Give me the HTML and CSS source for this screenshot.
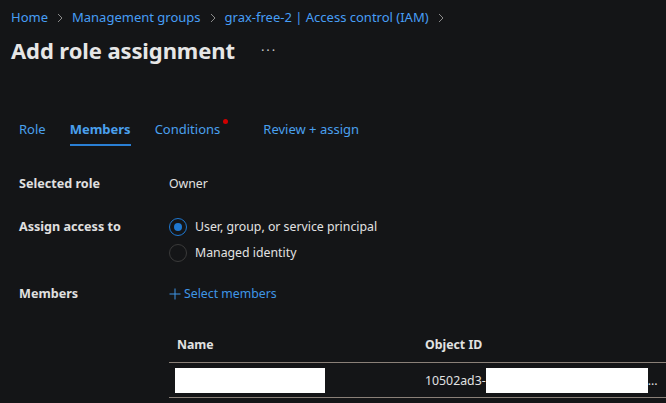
FILE: index.html
```html
<!DOCTYPE html>
<html>
<head>
<meta charset="utf-8">
<link rel="stylesheet" href="styles.css">
</head>
<body>
<div class="page">
  <nav class="crumbs">
    <a>Home</a>
    <svg class="chev" width="6" height="10" viewBox="0 0 6 10"><path d="M1 1l4 4-4 4" fill="none" stroke="#8a8a8a" stroke-width="1"/></svg>
    <a>Management groups</a>
    <svg class="chev" width="6" height="10" viewBox="0 0 6 10"><path d="M1 1l4 4-4 4" fill="none" stroke="#8a8a8a" stroke-width="1"/></svg>
    <a>grax-free-2 | Access control (IAM)</a>
    <svg class="chev" width="6" height="10" viewBox="0 0 6 10"><path d="M1 1l4 4-4 4" fill="none" stroke="#8a8a8a" stroke-width="1"/></svg>
  </nav>
  <div class="titlebar">
    <h1>Add role assignment</h1>
    <span class="more">···</span>
  </div>
  <div class="body">
    <div class="tabs">
      <span class="tab">Role</span>
      <span class="tab active">Members</span>
      <span class="tab dot">Conditions</span>
      <span class="tab review">Review + assign</span>
    </div>
    <div class="form">
      <div class="row r1">
        <div class="label">Selected role</div>
        <div class="value">Owner</div>
      </div>
      <div class="row r2">
        <div class="label">Assign access to</div>
        <div class="value radios">
          <div class="radio on"><span class="circle"></span>User, group, or service principal</div>
          <div class="radio"><span class="circle"></span>Managed identity</div>
        </div>
      </div>
      <div class="row r3">
        <div class="label">Members</div>
        <div class="value link"><svg class="plus" width="12" height="12" viewBox="0 0 12 12"><path d="M6 0.5v11M0.5 6h11" stroke="#3f95e6" stroke-width="1" fill="none"/></svg>Select members</div>
      </div>
    </div>
    <div class="table">
      <div class="thead">
        <div class="cell c1">Name</div>
        <div class="cell c2">Object ID</div>
      </div>
      <div class="trow">
        <div class="cell c1"><span class="redact r-name"></span></div>
        <div class="cell c2">10502ad3-<span class="redact r-id"></span>...</div>
      </div>
    </div>
  </div>
</div>
</body>
</html>
```
FILE: styles.css
```css
html, body {
  margin: 0;
  padding: 0;
  background: #141517;
}
body {
  font-family: "Noto Sans", "Open Sans", sans-serif;
  font-size: 13px;
  color: #e2e2e2;
  width: 666px;
  height: 403px;
  overflow: hidden;
}
.page {
  padding-left: 11px;
}
.crumbs {
  display: flex;
  align-items: center;
  gap: 9px;
  height: 15px;
  padding-top: 10px;
  font-size: 13px;
  line-height: 15px;
}
.crumbs a {
  color: #479ef5;
}
.chev {
  display: block;
}
.titlebar {
  display: flex;
  align-items: center;
  margin-top: 9px;
  height: 32px;
}
h1 {
  margin: 0;
  font-size: 22px;
  font-weight: 700;
  color: #e6e6e6;
  line-height: 32px;
  letter-spacing: -0.1px;
}
.more {
  margin-left: 26px;
  color: #c8c8c8;
  font-size: 13px;
  line-height: 32px;
  letter-spacing: 2px;
}
.body {
  padding-left: 8px;
}
.tabs {
  display: flex;
  margin-top: 46px;
  height: 34px;
}
.tab {
  position: relative;
  margin-right: 24px;
  color: #4aa0ee;
  line-height: 34px;
  height: 34px;
  box-sizing: border-box;
}
.tab.active {
  font-weight: 700;
  border-bottom: 2px solid #2a7fd4;
}
.tab.dot {
  margin-right: 43px;
}
.tab.dot::after {
  content: "";
  position: absolute;
  right: -8px;
  top: 7px;
  width: 5px;
  height: 5px;
  border-radius: 50%;
  background: #d00000;
}
.form {
  margin-top: 29px;
}
.row {
  display: flex;
}
.label {
  width: 150px;
  font-weight: 700;
  line-height: 18px;
  color: #e0e0e0;
  font-size: 12.6px;
}
.value {
  line-height: 18px;
  font-size: 12.3px;
}
.r2 {
  margin-top: 25px;
}
.r3 {
  margin-top: 23px;
}
.radios {
  display: flex;
  flex-direction: column;
  gap: 8px;
}
.radio {
  display: flex;
  align-items: center;
  gap: 8px;
  line-height: 18px;
}
.circle {
  width: 16px;
  height: 16px;
  border-radius: 50%;
  border: 1px solid #3a3a3a;
  box-sizing: content-box;
  display: flex;
  align-items: center;
  justify-content: center;
}
.radio.on .circle {
  border-color: #1f78d1;
}
.radio.on .circle::after {
  content: "";
  width: 8px;
  height: 8px;
  border-radius: 50%;
  background: #1f78d1;
}
.link {
  display: flex;
  align-items: center;
  gap: 3px;
  color: #3f95e6;
}
.plus {
  display: block;
}
.table {
  margin-left: 150px;
  margin-top: 24px;
  font-size: 12.3px;
}
.thead, .trow {
  display: flex;
  border-bottom: 1px solid #8a8078;
}
.thead {
  height: 35px;
  align-items: center;
  font-weight: 700;
}
.trow {
  height: 34px;
  align-items: center;
}
.cell {
  padding-left: 8px;
  box-sizing: border-box;
  display: flex;
  align-items: center;
}
.c1 {
  width: 248px;
}
.c2 {
  flex: 1;
}
.redact {
  display: block;
  background: #ffffff;
  height: 25px;
}
.r-name {
  width: 150px;
  margin-left: -2px;
}
.r-id {
  width: 162px;
}
```
